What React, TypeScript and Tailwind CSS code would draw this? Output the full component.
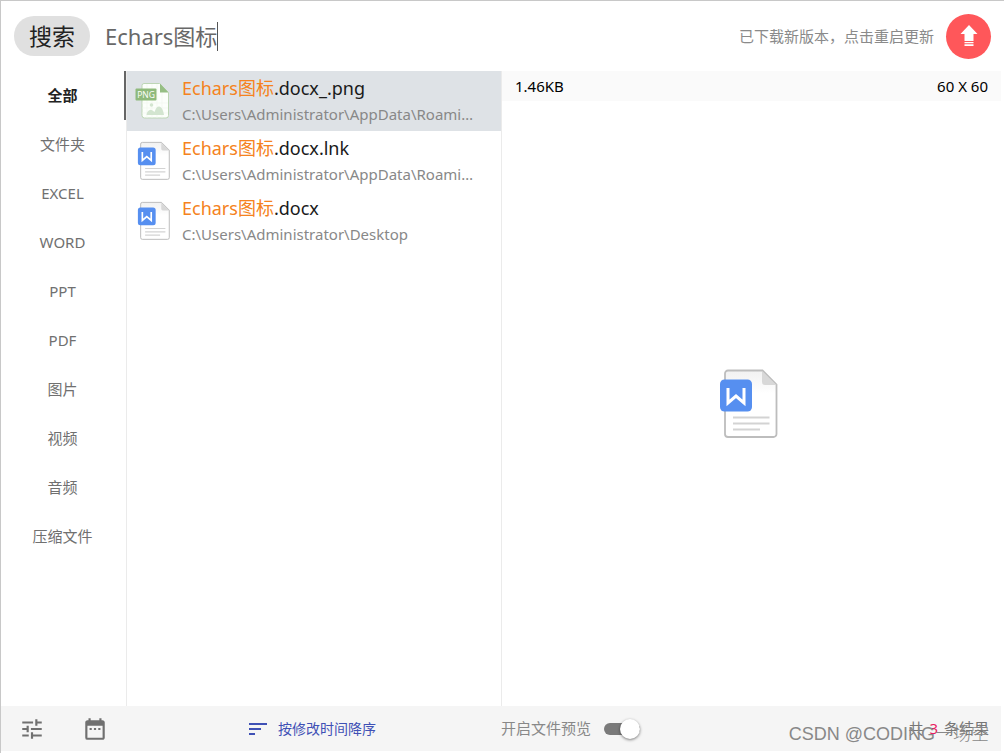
import { useState } from "react";
import { MdDateRange, MdSort, MdTune } from "react-icons/md";

const categories = ["全部", "文件夹", "EXCEL", "WORD", "PPT", "PDF", "图片", "视频", "音频", "压缩文件"];

type FileKind = "png" | "word";

interface Result {
  kind: FileKind;
  suffix: string;
  path: string;
}

const results: Result[] = [
  { kind: "png", suffix: ".docx_.png", path: "C:\\Users\\Administrator\\AppData\\Roaming\\Microsoft\\Office" },
  { kind: "word", suffix: ".docx.lnk", path: "C:\\Users\\Administrator\\AppData\\Roaming\\Microsoft\\Office" },
  { kind: "word", suffix: ".docx", path: "C:\\Users\\Administrator\\Desktop" },
];

function WordIcon({ className }: { className: string }) {
  return (
    <svg viewBox="0 0 60 72" className={className} aria-hidden="true">
      <defs>
        <linearGradient id="word-page" x1="0" y1="0" x2="0" y2="1">
          <stop offset="0" stopColor="#f1f1f1" />
          <stop offset="0.35" stopColor="#ffffff" />
        </linearGradient>
      </defs>
      <path d="M9 2.5H43.5L57.500 16.500V66a3 3 0 0 1-3 3H9a3 3 0 0 1-3-3V5.500a3 3 0 0 1 3-3Z" fill="url(#word-page)" stroke="#bdbdbd" strokeWidth="1.800" />
      <path d="M43 3V14a3 3 0 0 0 3 3H57.500Z" fill="#d8d8d8" />
      <path d="M14 49.500H50.500M14 55.500H50.500M14 61.500H41" stroke="#d3d3d3" strokeWidth="2" />
      <rect x="1" y="11.500" width="32" height="32" rx="4.500" fill="#568ff0" />
      <path d="M9 20V35L17 28L25 35V20" fill="none" stroke="#fff" strokeWidth="3" />
    </svg>
  );
}

function PngIcon({ className }: { className: string }) {
  return (
    <svg viewBox="0 0 36 38" className={className} aria-hidden="true">
      <path d="M9 1.500H24.500L33.500 10.500V33.500a2.500 2.500 0 0 1-2.500 2.500H9.500A2.500 2.500 0 0 1 7 33.500V3.500a2 2 0 0 1 2-2Z" fill="#fcfffb" stroke="#bdd6b5" />
      <path d="M12 2V36M17 2V36M22 2V36M27 11V36M7 21H33M7 26H33M7 31H33" stroke="#f0f5ee" strokeWidth="0.600" />
      <path d="M25 1.500L33.500 10.500H25Z" fill="#96be84" />
      <path d="M11.500 33C12 29 15 26.500 17.500 28.500L19.500 30C21 26 22 24.500 24 24.500C27 25 28.500 29 29 33Z" fill="#d3e5d0" />
      <circle cx="16.500" cy="23" r="1.800" fill="#d3e5d0" />
      <rect x="0.500" y="6.500" width="21" height="12" rx="1" fill="#8fba7c" />
      <text x="11" y="15.500" textAnchor="middle" fontSize="8.500" fill="#fff" fontFamily="Open Sans, sans-serif">PNG</text>
    </svg>
  );
}

export default function App() {
  const [query, setQuery] = useState("Echars图标");
  const [category, setCategory] = useState("全部");
  const [selected, setSelected] = useState(0);
  const [preview, setPreview] = useState(true);

  return (
    <div className="flex h-screen flex-col border-t border-l border-[#c8c8c8] bg-white pr-[3px] pb-0.5 font-['Noto_Sans','Noto_Sans_CJK_SC',sans-serif] text-[15px] text-[#707070]">
      <header className="flex h-[70px] shrink-0 items-center pl-[13px] pr-2.5">
        <button className="h-10 rounded-full bg-[#e0e0e0] px-[15px] text-[23px] leading-10 text-[#222]">搜索</button>
        <div className="ml-[15px] flex min-w-0 flex-1 items-center">
          <input
            aria-label="搜索文件"
            className="field-sizing-content bg-transparent text-[22px] leading-10 text-[#686868] outline-none"
            value={query}
            onChange={(e) => setQuery(e.target.value)}
          />
          <span className="h-[29px] w-px bg-[#555]" />
        </div>
        <span className="text-[#8a8a8a]">已下载新版本，点击重启更新</span>
        <button aria-label="重启更新" className="ml-3 flex size-[45px] items-center justify-center rounded-full bg-[#ff575a]">
          <svg viewBox="0 0 20 22" className="h-[22px] w-5" fill="#fff" aria-hidden="true">
            <path d="M10 0L18.500 9H14.500V16H5.500V9H1.500Z" />
            <path d="M5.500 17H14.500V18.200H5.500ZM5.500 19.200H14.500V21H5.500Z" />
          </svg>
        </button>
      </header>

      <main className="flex min-h-0 flex-1">
        <nav className="flex w-[125px] shrink-0 flex-col">
          {categories.map((name) => (
            <button
              key={name}
              onClick={() => setCategory(name)}
              className={
                name === category
                  ? "h-[49px] border-r-2 border-[#666] font-bold text-[#222]"
                  : "h-[49px] border-r-2 border-transparent"
              }
            >
              {name}
            </button>
          ))}
        </nav>

        <ul className="w-[376px] shrink-0 border-x border-[#ebebeb]">
          {results.map((item, index) => (
            <li key={item.suffix}>
              <button
                onClick={() => setSelected(index)}
                className={
                  index === selected
                    ? "flex h-[60px] w-full items-center bg-[#dee2e6] pr-5 pl-2 text-left"
                    : "flex h-[60px] w-full items-center pr-5 pl-2 text-left"
                }
              >
                <span className="flex w-9 shrink-0 justify-end">
                  {item.kind === "png" ? <PngIcon className="h-[38px] w-9" /> : <WordIcon className="h-10 w-[34px]" />}
                </span>
                <span className="ml-[11px] min-w-0 flex-1">
                  <span className="block truncate text-[18px] leading-[26px] text-[#1a1a1a]">
                    <span className="text-[#f58220]">Echars图标</span>
                    {item.suffix}
                  </span>
                  <span className="block truncate leading-[26px] text-[#888]">{item.path}</span>
                </span>
              </button>
            </li>
          ))}
        </ul>

        <section className="flex min-w-0 flex-1 flex-col">
          <div className="flex h-[30px] shrink-0 items-center justify-between bg-[#fafafa] px-[13px] text-black">
            <span>1.46KB</span>
            <span>60 X 60</span>
          </div>
          <div className="flex flex-1 items-center justify-center pr-1.5">
            <WordIcon className="h-[72px] w-[60px]" />
          </div>
        </section>
      </main>

      <footer className="relative flex h-[45px] shrink-0 items-center bg-[#f5f5f5] pr-3 pl-[18px]">
        <button aria-label="筛选" className="text-[#707070]">
          <MdTune size={26} />
        </button>
        <button aria-label="日期" className="ml-[37px] text-[#707070]">
          <MdDateRange size={26} />
        </button>
        <button className="ml-[138px] flex items-center gap-2 text-[14px] text-[#3f51b5]">
          <MdSort size={24} />
          按修改时间降序
        </button>
        <label className="ml-[125px] flex items-center gap-[13px] text-[#888]">
          开启文件预览
          <span className="relative flex h-5 w-9 items-center">
            <input
              type="checkbox"
              role="switch"
              checked={preview}
              onChange={(e) => setPreview(e.target.checked)}
              className="peer h-3 w-full appearance-none rounded-full bg-[#7a7a7a]"
            />
            <span className="pointer-events-none absolute left-0 size-5 rounded-full bg-white shadow-[0_1px_3px_rgba(0,0,0,0.5)] peer-checked:left-4" />
          </span>
        </label>
        <p className="ml-auto text-[#777]">
          共 <span className="mx-0.5 text-[#e91e63]">3</span> 条结果
        </p>
        <span className="pointer-events-none absolute right-3 bottom-0.5 font-['Liberation_Sans','Noto_Sans_CJK_SC',sans-serif] text-[18px] leading-[30px] font-light text-[#888]">
          CSDN @CODING一场空
        </span>
      </footer>
    </div>
  );
}
